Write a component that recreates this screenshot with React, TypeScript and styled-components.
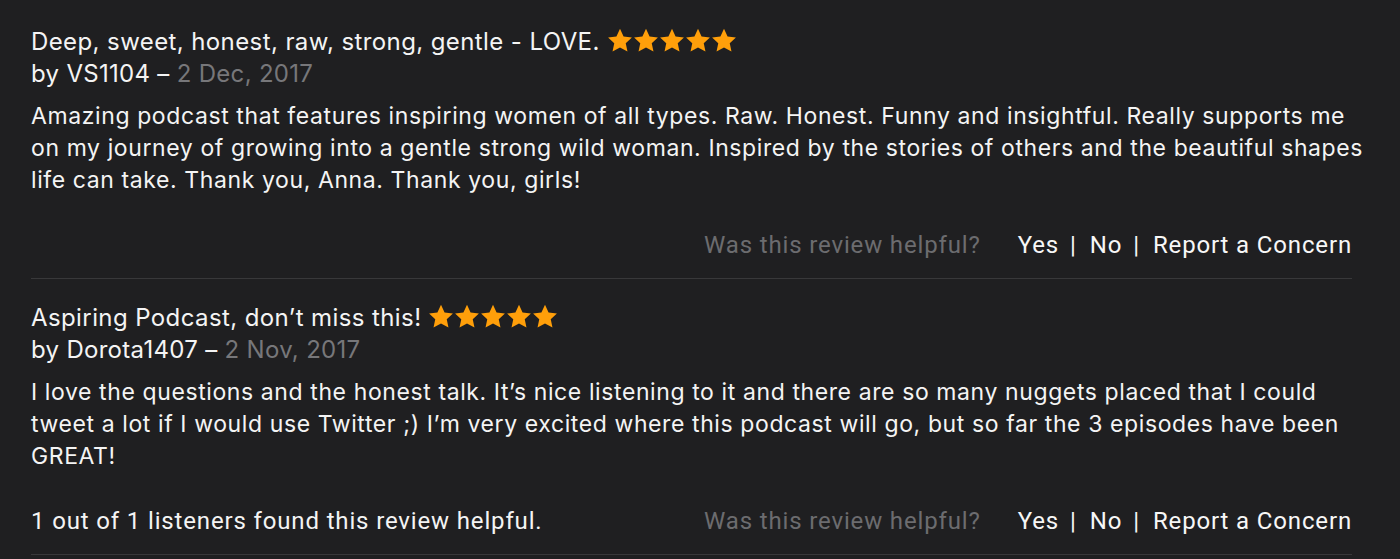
import React from "react";
import styled, { createGlobalStyle } from "styled-components";

const Global = createGlobalStyle`
  html, body { margin: 0; padding: 0; background: #1f1f21; }
  body { font-family: Inter, "Noto Sans", sans-serif; -webkit-font-smoothing: antialiased; }
`;

const Page = styled.div`
  padding: 26px 48px 0 31px;
  background: #1f1f21;
  color: #f4f4f4;
`;

const Review = styled.section`
  display: flex;
  flex-direction: column;
  border-bottom: 1px solid #38383a;
  padding-bottom: 17px;
  & + & { padding-top: 23px; }
`;

const Title = styled.div`
  display: flex;
  align-items: center;
  gap: 7px;
  font-size: 24px;
  letter-spacing: 0.4px;
  line-height: 32px;
`;

const Stars = styled.span`
  display: inline-flex;
  margin-top: -2px;
`;

const Byline = styled.div`
  font-size: 24px;
  letter-spacing: 0.3px;
  line-height: 32px;
`;

const DateText = styled.span`
  color: #77777a;
`;

const Body = styled.p`
  margin: 10px 0 0;
  font-size: 23px;
  letter-spacing: 0.6px;
  line-height: 32px;
  white-space: pre;
`;

const Footer = styled.div`
  display: flex;
  align-items: center;
  margin-top: 33px;
  font-family: Roboto, "Liberation Sans", sans-serif;
  font-size: 24px;
  letter-spacing: 0.85px;
  line-height: 32px;
  white-space: nowrap;
`;

const Helpful = styled.span`
  flex: 1;
`;

const Ask = styled.span`
  color: #6c6c6f;
  margin-right: 37px;
`;

const Link = styled.span`
  color: #f7f7f7;
`;

const Sep = styled.span`
  color: #f7f7f7;
  margin: 0 13px 0 11px;
`;

const Star = () => (
  <svg width="26" height="26" viewBox="0 0 24 24">
    <path
      d="M12 0.8l3.3 7.1 7.7.9-5.7 5.3 1.6 7.7L12 17.9l-6.9 3.9 1.6-7.7L1 8.8l7.7-.9z"
      fill="#ff9f0a"
    />
  </svg>
);

const FiveStars = () => (
  <Stars>
    {[0, 1, 2, 3, 4].map((i) => (
      <Star key={i} />
    ))}
  </Stars>
);

const reviews = [
  {
    title: "Deep, sweet, honest, raw, strong, gentle - LOVE.",
    author: "VS1104",
    date: "2 Dec, 2017",
    body:
      "Amazing podcast that features inspiring women of all types. Raw. Honest. Funny and insightful. Really supports me\non my journey of growing into a gentle strong wild woman. Inspired by the stories of others and the beautiful shapes\nlife can take. Thank you, Anna. Thank you, girls!",
    helpful: "",
  },
  {
    title: "Aspiring Podcast, don\u2019t miss this!",
    author: "Dorota1407",
    date: "2 Nov, 2017",
    body:
      "I love the questions and the honest talk. It\u2019s nice listening to it and there are so many nuggets placed that I could\ntweet a lot if I would use Twitter ;) I\u2019m very excited where this podcast will go, but so far the 3 episodes have been\nGREAT!",
    helpful: "1 out of 1 listeners found this review helpful.",
  },
];

export default function App() {
  return (
    <Page>
      <Global />
      {reviews.map((r) => (
        <Review key={r.author}>
          <Title>
            <span>{r.title}</span>
            <FiveStars />
          </Title>
          <Byline>
            by {r.author} – <DateText>{r.date}</DateText>
          </Byline>
          <Body>{r.body}</Body>
          <Footer>
            <Helpful>{r.helpful}</Helpful>
            <Ask>Was this review helpful?</Ask>
            <Link>Yes</Link>
            <Sep>|</Sep>
            <Link>No</Link>
            <Sep>|</Sep>
            <Link>Report a Concern</Link>
          </Footer>
        </Review>
      ))}
    </Page>
  );
}
